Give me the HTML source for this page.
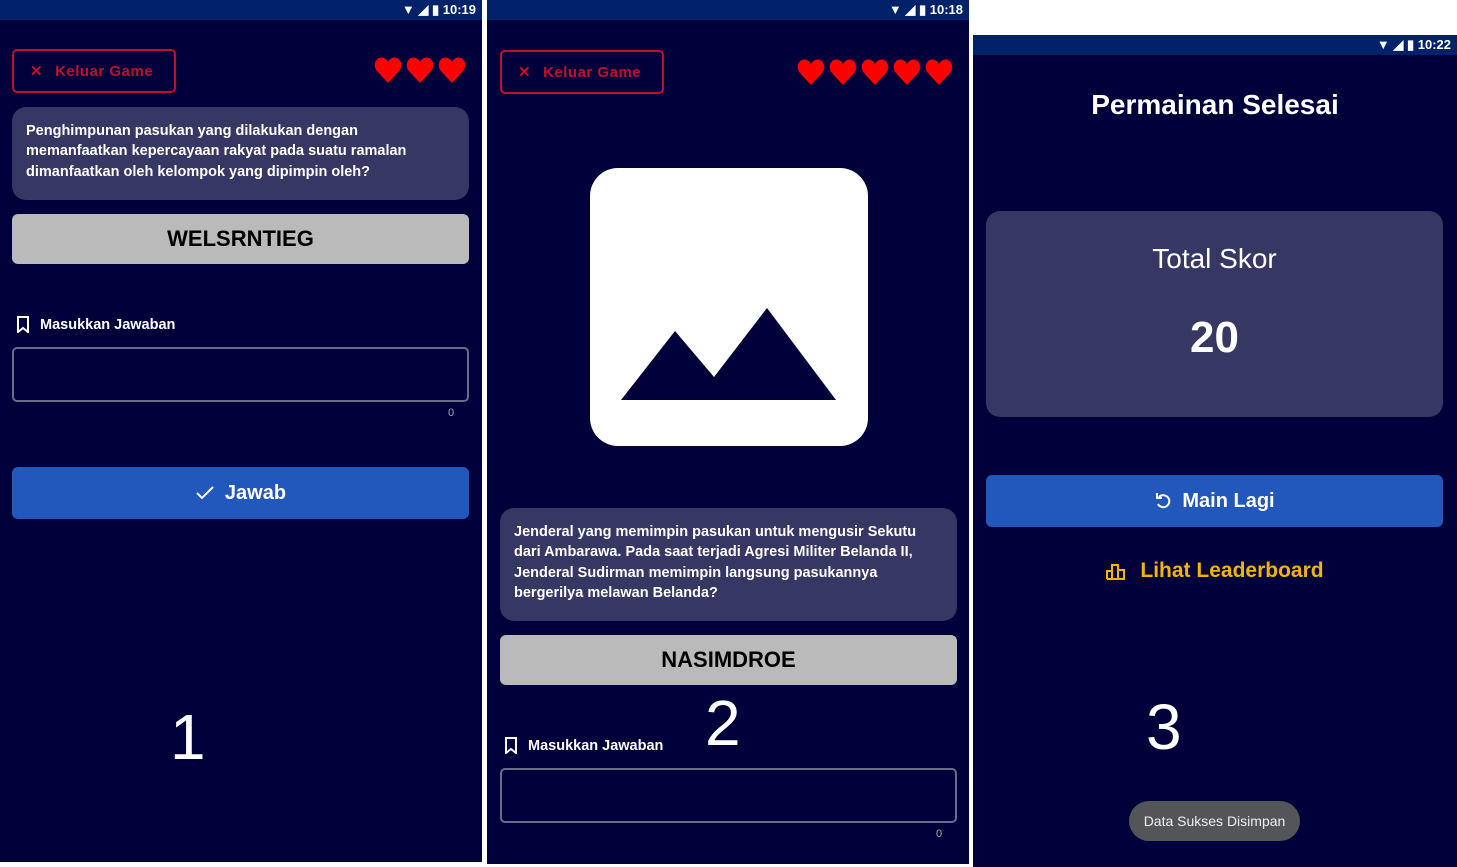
<!DOCTYPE html>
<html><head><meta charset="utf-8"><style>
*{margin:0;padding:0;box-sizing:border-box}
body{width:1457px;height:867px;background:#fff;position:relative;overflow:hidden;font-family:"Liberation Sans",sans-serif}
.p{position:absolute;background:#00003a;overflow:hidden}
.sb{position:absolute;left:0;right:0;top:0;height:20px;background:#00226a;color:#fff;font-size:13px;font-weight:bold;text-align:right;padding-right:6px;line-height:20px}
.a{position:absolute}
.exit{border:2px solid #c0102c;border-radius:5px;color:#c0102c;font-weight:bold;font-size:15px;letter-spacing:.5px;display:flex;align-items:center;padding-left:16px;gap:12px;height:44px;width:164px}
.q{background:#363763;border-radius:14px;color:#fff;font-size:14.5px;font-weight:bold;line-height:20.3px;padding:14px}
.w{background:#bababa;border-radius:6px;color:#000;font-weight:bold;font-size:22px;text-align:center;height:50px;line-height:50px}
.lbl{color:#fff;font-weight:bold;font-size:14.5px;display:flex;align-items:center;gap:10px}
.inp{border:2px solid #6a6b8a;border-radius:5px;height:55px}
.cnt{color:#aaa;font-size:11px}
.btn{background:#2257bb;border-radius:6px;color:#fff;font-weight:bold;font-size:20px;display:flex;align-items:center;justify-content:center;gap:10px;height:52px}
.num{color:#fff;font-size:64px;font-family:"Liberation Sans",sans-serif}
</style></head><body>
<div class="p" style="left:0;top:0;width:482px;height:862px">
 <div class="sb">▼ ◢ ▮ 10:19</div>
 <div class="a exit" style="left:12px;top:49px"><span>✕</span>Keluar Game</div>
 <div class="a" style="left:374px;top:56px"><svg width="96" height="28" viewBox="0 0 96 28"><g fill="#f00"><path id="h" d="M14 27 L3 15 C-2 9 2 1 8 1.5 C11 2 13 4 14 6 C15 4 17 2 20 1.5 C26 1 30 9 25 15 Z"/><use href="#h" x="32"/><use href="#h" x="64"/></g></svg></div>
 <div class="a q" style="left:12px;top:107px;width:457px;height:93px">Penghimpunan pasukan yang dilakukan dengan memanfaatkan kepercayaan rakyat pada suatu ramalan dimanfaatkan oleh kelompok yang dipimpin oleh?</div>
 <div class="a w" style="left:12px;top:214px;width:457px">WELSRNTIEG</div>
 <div class="a lbl" style="left:16px;top:316px"><svg width="14" height="17"><path d="M2 1h10v15l-5-4-5 4z" fill="none" stroke="#fff" stroke-width="2"/></svg>Masukkan Jawaban</div>
 <div class="a inp" style="left:12px;top:347px;width:457px"></div>
 <div class="a cnt" style="left:448px;top:407px">0</div>
 <div class="a btn" style="left:12px;top:467px;width:457px"><svg width="20" height="16"><path d="M2 8l5 5 11-11" fill="none" stroke="#fff" stroke-width="2"/></svg>Jawab</div>
 <div class="a num" style="left:170px;top:700px">1</div>
</div>
<div class="p" style="left:487px;top:0;width:482px;height:864px">
 <div class="sb">▼ ◢ ▮ 10:18</div>
 <div class="a exit" style="left:13px;top:50px"><span>✕</span>Keluar Game</div>
 <div class="a" style="left:310px;top:58px"><svg width="160" height="28" viewBox="0 0 160 28"><g fill="#f00"><path id="h2" d="M14 27 L3 15 C-2 9 2 1 8 1.5 C11 2 13 4 14 6 C15 4 17 2 20 1.5 C26 1 30 9 25 15 Z"/><use href="#h2" x="32"/><use href="#h2" x="64"/><use href="#h2" x="96"/><use href="#h2" x="128"/></g></svg></div>
 <div class="a" style="left:103px;top:168px;width:278px;height:278px;background:#fff;border-radius:28px"><svg width="278" height="278"><path d="M31 232L85 163L124 209L177 140L246 232Z" fill="#00003a"/></svg></div>
 <div class="a q" style="left:13px;top:508px;width:457px;height:113px">Jenderal yang memimpin pasukan untuk mengusir Sekutu dari Ambarawa. Pada saat terjadi Agresi Militer Belanda II, Jenderal Sudirman memimpin langsung pasukannya bergerilya melawan Belanda?</div>
 <div class="a w" style="left:13px;top:635px;width:457px">NASIMDROE</div>
 <div class="a lbl" style="left:17px;top:737px"><svg width="14" height="17"><path d="M2 1h10v15l-5-4-5 4z" fill="none" stroke="#fff" stroke-width="2"/></svg>Masukkan Jawaban</div>
 <div class="a num" style="left:218px;top:686px">2</div>
 <div class="a inp" style="left:13px;top:768px;width:457px"></div>
 <div class="a cnt" style="left:449px;top:828px">0</div>
</div>
<div class="p" style="left:973px;top:35px;width:484px;height:832px">
 <div class="sb">▼ ◢ ▮ 10:22</div>
 <div class="a" style="left:0;width:484px;top:54px;text-align:center;color:#fff;font-weight:bold;font-size:28px">Permainan Selesai</div>
 <div class="a" style="left:13px;top:176px;width:457px;height:206px;background:#363763;border-radius:14px;color:#fff;text-align:center">
  <div style="margin-top:32px;font-size:28px">Total Skor</div>
  <div style="margin-top:38px;font-size:44px;font-weight:bold">20</div>
 </div>
 <div class="a btn" style="left:13px;top:440px;width:457px"><svg width="18" height="20"><path d="M5 6a6 6 0 1 1-1 7" fill="none" stroke="#fff" stroke-width="2"/><path d="M3 2v5h5" fill="none" stroke="#fff" stroke-width="2"/></svg>Main Lagi</div>
 <div class="a" style="left:0;width:484px;top:524px;display:flex;justify-content:center;gap:14px;color:#f5b400;font-weight:bold;font-size:21px;align-items:center"><svg width="20" height="18"><path d="M1 17V9h5v8M6 17V3h6v14M12 17V8h6v9H1" fill="none" stroke="#f5b400" stroke-width="2"/></svg>Lihat Leaderboard</div>
 <div class="a num" style="left:173px;top:655px">3</div>
 <div class="a" style="left:156px;top:766px;width:171px;height:40px;border-radius:20px;background:#545558;color:#eee;font-size:14px;text-align:center;line-height:40px">Data Sukses Disimpan</div>
</div>
</body></html>
